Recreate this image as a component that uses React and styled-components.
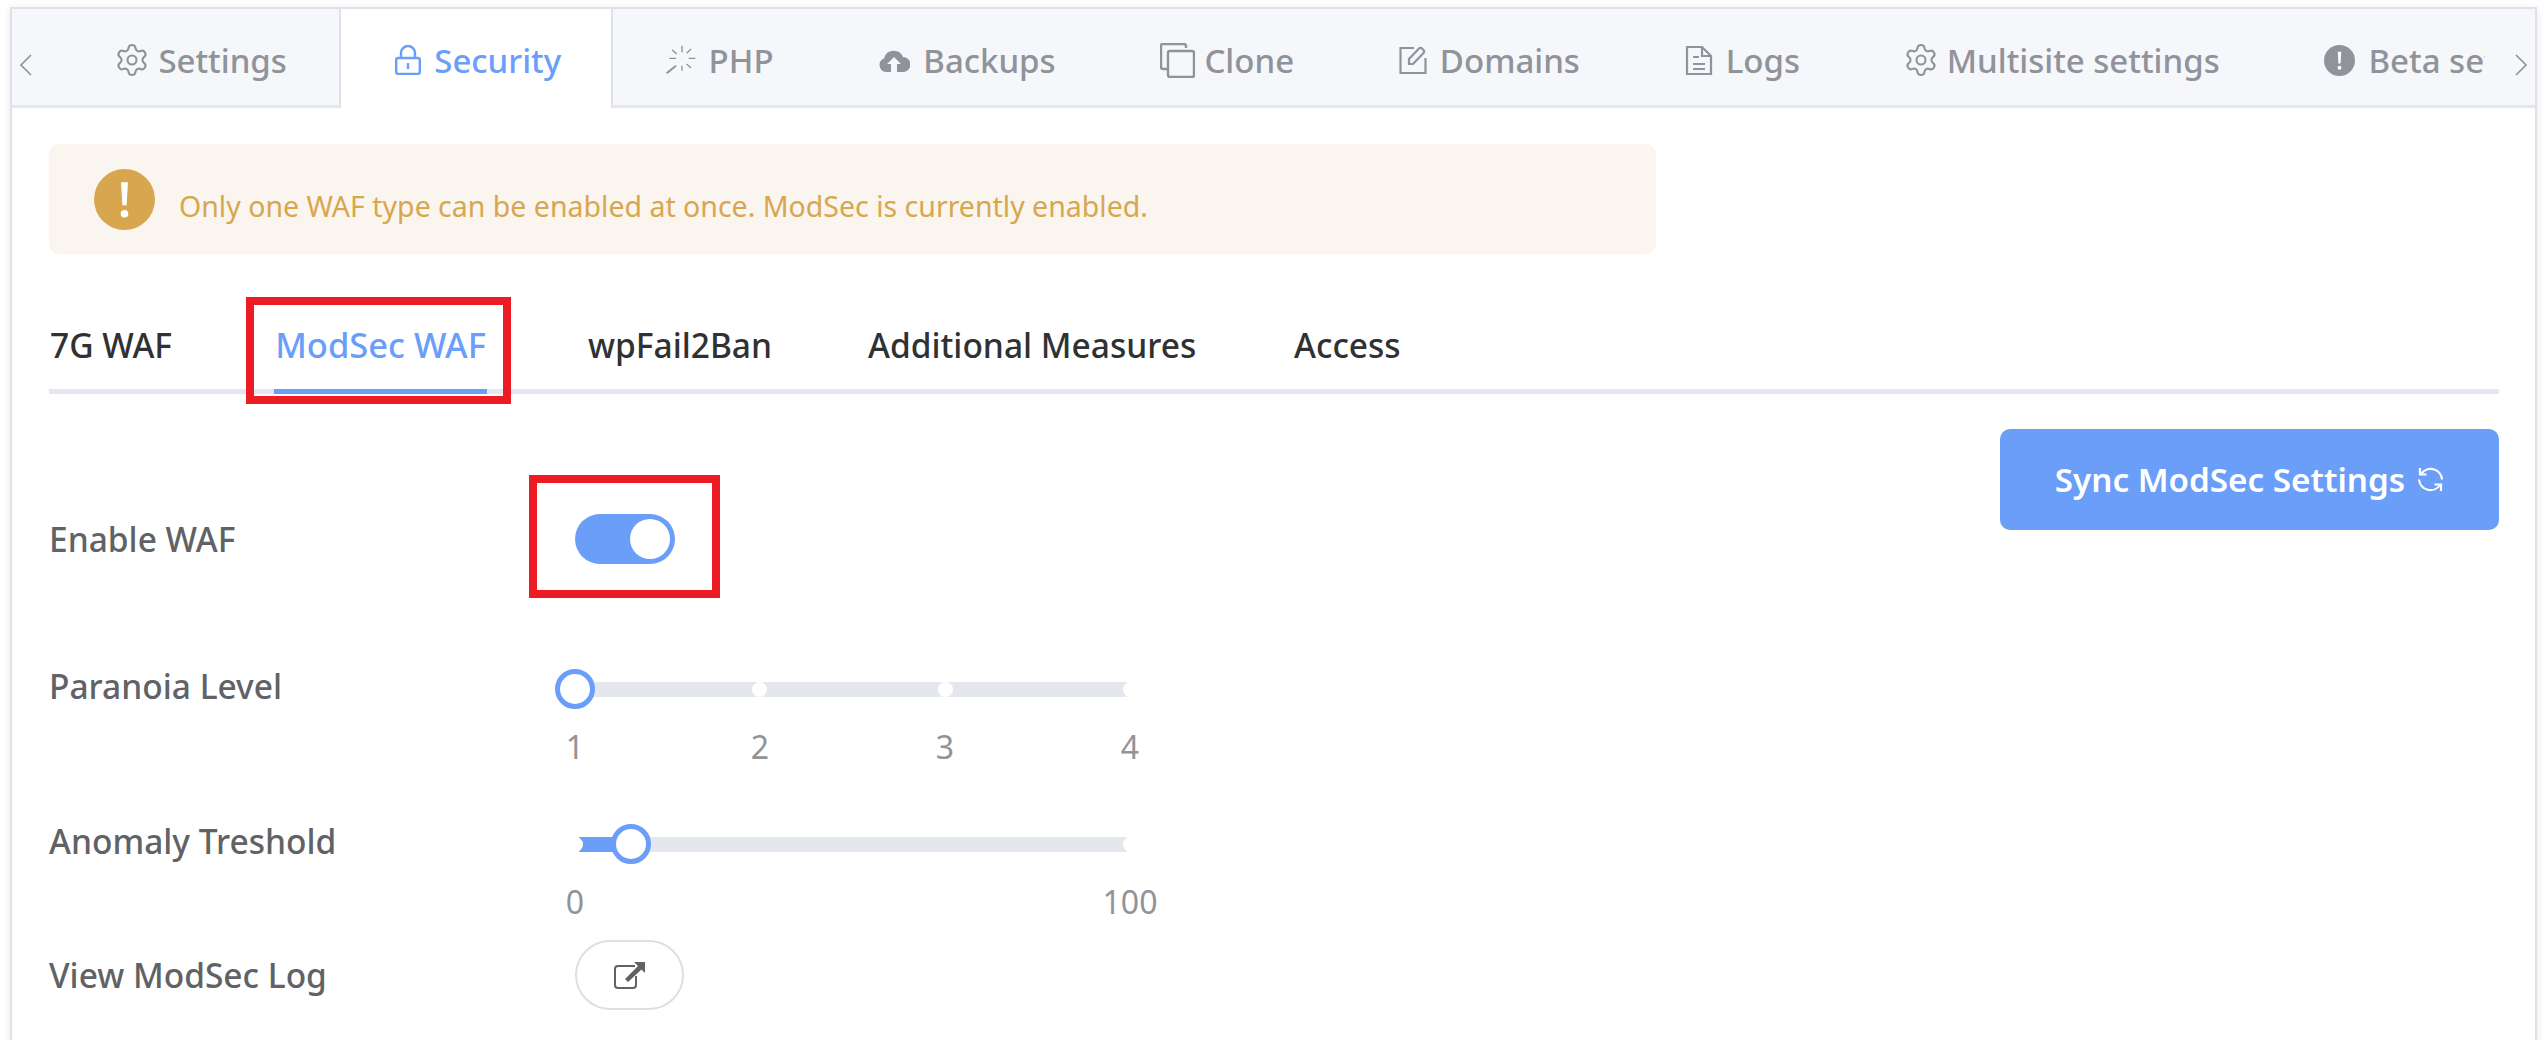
import React from "react";
import styled, { createGlobalStyle } from "styled-components";
import { Settings } from "lucide-react";

const GlobalStyle = createGlobalStyle`
  html, body {
    margin: 0;
    height: 1040px;
    overflow: hidden;
    background: #fff;
    font-family: "Noto Sans", "Open Sans", Arial, sans-serif;
  }
`;

const Card = styled.div`
  margin: 7px 10px 0;
  min-height: 1100px;
  background: #fff;
  border: 2px solid #dfe1e8;
  box-shadow: 0 2px 8px rgba(0, 0, 0, 0.1);
`;

const TabBar = styled.div`
  position: relative;
  height: 96px;
  background: #f5f7fa;
  border-bottom: 3px solid #e4e7ed;
`;

const Arrow = styled.div`
  position: absolute;
  top: 45px;
  ${props => (props.$right ? "right: 8px;" : "left: 8px;")}
  color: #909399;
  line-height: 0;
`;

const TabScroll = styled.div`
  display: flex;
  height: 99px;
  margin-right: 50px;
  padding-left: 52px;
  overflow: hidden;
`;

const Tab = styled.div`
  display: flex;
  flex: none;
  align-items: center;
  gap: 13px;
  height: 99px;
  padding: 3px 52.4px 0;
  box-sizing: border-box;
  font-size: 33px;
  font-weight: 500;
  white-space: nowrap;
  color: ${props => (props.$active ? "#6a9ef8" : "#909399")};
  ${props =>
    props.$active &&
    `
    background: #fff;
    border-left: 2px solid #dfe1e8;
    border-right: 2px solid #dfe1e8;
    padding: 3px 50px 0 54px;
  `}
`;

const Gear = styled(Settings)`
  margin: 0 -5px 0 -2px;
`;

const CopySvg = styled.svg`
  margin-right: -4px;
`;

const Body = styled.div`
  padding: 36px 36px 0 37px;
`;

const Alert = styled.div`
  display: flex;
  align-items: center;
  gap: 24px;
  width: 1607px;
  height: 110px;
  padding-left: 45px;
  box-sizing: border-box;
  background: #faf5ee;
  border-radius: 10px;
  color: #d9a650;
  font-size: 28.5px;
`;

const AlertText = styled.span`
  margin-top: 14px;
`;

const SubTabs = styled.div`
  display: flex;
  margin-top: 36px;
  border-bottom: 5px solid #e4e7ed;
`;

const SubTab = styled.div`
  position: relative;
  width: ${props => props.$width}px;
  height: 104px;
  margin-bottom: -5px;
  margin-left: ${props => props.$left}px;
  padding-top: 30px;
  box-sizing: border-box;
  border-bottom: 5px solid ${props => (props.$active ? "#6a9ef8" : "transparent")};
  font-size: ${props => (props.$active ? "34.5px" : "33.5px")};
  font-weight: 500;
  line-height: 50px;
  white-space: nowrap;
  text-align: ${props => (props.$active ? "center" : "left")};
  color: ${props => (props.$active ? "#6a9ef8" : "#303133")};
`;

const Marker = styled.div`
  position: absolute;
  inset: ${props => props.$inset};
  border: 8px solid #ed1c24;
`;

const FormArea = styled.div`
  display: flex;
  justify-content: space-between;
  align-items: flex-start;
`;

const Rows = styled.div`
  display: flex;
  flex-direction: column;
`;

const Row = styled.div`
  display: grid;
  grid-template-columns: 526px auto;
  align-items: ${props => props.$align || "center"};
  margin-top: ${props => props.$top}px;
`;

const Label = styled.div`
  font-size: 33.5px;
  font-weight: 500;
  line-height: 50px;
  color: #606266;
`;

const Toggle = styled.div`
  position: relative;
  display: flex;
  justify-content: flex-end;
  align-items: center;
  width: 100px;
  height: 50px;
  padding: 0 5px;
  box-sizing: border-box;
  border-radius: 25px;
  background: #6a9ef8;
`;

const Knob = styled.div`
  width: 40px;
  height: 40px;
  border-radius: 50%;
  background: #fff;
`;

const Slider = styled.div`
  padding-top: 21px;
`;

const SliderBox = styled.div`
  position: relative;
  width: 555px;
  height: 15px;
`;

const Track = styled.div`
  position: relative;
  height: 15px;
  background: #e4e7ed;
  clip-path: inset(0 3px 0 4px);
`;

const Fill = styled.div`
  height: 15px;
  width: ${props => props.$value}%;
  background: #6a9ef8;
`;

const Stop = styled.div`
  position: absolute;
  top: 0;
  left: ${props => props.$at}%;
  width: 15px;
  height: 15px;
  margin-left: -7.5px;
  border-radius: 50%;
  background: #fff;
`;

const Thumb = styled.div`
  position: absolute;
  top: -13px;
  left: ${props => props.$at}%;
  width: 40px;
  height: 40px;
  margin-left: -20px;
  box-sizing: border-box;
  border: 5px solid #6a9ef8;
  border-radius: 50%;
  background: #fff;
`;

const Marks = styled.div`
  display: flex;
  justify-content: space-between;
  width: 555px;
  margin-top: 30px;
`;

const Mark = styled.div`
  display: flex;
  justify-content: center;
  width: 0;
  font-size: 32px;
  line-height: 40px;
  color: #909399;
`;

const LinkButton = styled.div`
  display: flex;
  align-items: center;
  justify-content: center;
  width: 109px;
  height: 70px;
  box-sizing: border-box;
  border: 2px solid #dcdfe6;
  border-radius: 35px;
  color: #606266;
`;

const SyncButton = styled.div`
  display: flex;
  align-items: center;
  justify-content: center;
  gap: 12px;
  width: 499px;
  height: 101px;
  margin-top: 35px;
  border-radius: 10px;
  background: #6a9ef8;
  color: #fff;
  font-size: 33.2px;
  font-weight: 600;
`;

const Lock = () => (
  <svg width="26" height="30" viewBox="0 0 26 30" fill="none" stroke="currentColor" strokeWidth="2.4">
    <rect x="1.2" y="13" width="23.6" height="16" rx="2" />
    <path d="M6 13V8a7 7 0 0 1 14 0v5" />
    <path d="M13 18v6" />
  </svg>
);

const Spinner = () => (
  <svg width="30" height="30" viewBox="50 28 90 90" fill="none" stroke="currentColor" strokeWidth="4">
    <path d="M98 30v20M125 40l-13 13M118 68h20M112 85l13 12M98 90v15M60 68h20M68 42l14 13" />
    <path d="M80 90l-28 23" strokeWidth="6" />
  </svg>
);

const Cloud = () => (
  <svg width="32" height="24" viewBox="0 0 32 24" fill="currentColor">
    <path d="M8 24A7 7 0 0 1 6 10.5 10 10 0 0 1 25 9a7.5 7.5 0 0 1 0 15h-6v-8h4l-7-7-7 7h4v8z" />
  </svg>
);

const Copy = () => (
  <CopySvg width="35" height="35" viewBox="0 0 35 35" fill="none" stroke="currentColor" strokeWidth="2.4">
    <path d="M26 5V3a2 2 0 0 0-2-2H3a2 2 0 0 0-2 2v21a2 2 0 0 0 2 2h4" />
    <rect x="8" y="8" width="26" height="26" rx="2" />
  </CopySvg>
);

const Edit = () => (
  <svg width="28" height="28" viewBox="0 0 28 28" fill="none" stroke="currentColor" strokeWidth="2.2">
    <path d="M15 2H1.5v25h25V12" />
    <path d="M10 18v-5L20 2.5a2 2 0 0 1 3 0l1.5 1.500a2 2 0 0 1 0 3L14 18z" />
  </svg>
);

const Doc = () => (
  <svg width="28" height="31" viewBox="0 0 28 31" fill="none" stroke="currentColor" strokeWidth="2.2">
    <path d="M2 2h15l9 9v18H2z" />
    <path d="M17 2v9h9M8 12h6M8 19h12M8 24h12" />
  </svg>
);

const Warning = ({ size }) => (
  <svg width={size} height={size} viewBox="0 0 32 32">
    <circle cx="16" cy="16" r="16" fill="currentColor" />
    <path d="M14.2 7h3.600l-.7 12h-2.200z" fill="#fff" />
    <circle cx="16" cy="23.500" r="2" fill="#fff" />
  </svg>
);

const Chevron = ({ right }) => (
  <svg width="12" height="22" viewBox="0 0 12 22" fill="none" stroke="currentColor" strokeWidth="1.600">
    <path d={right ? "M1 1l10 10L1 21" : "M11 1L1 11l10 10"} />
  </svg>
);

const Refresh = () => (
  <svg width="27" height="27" viewBox="0 0 27 27" fill="none" stroke="currentColor" strokeWidth="2.2">
    <path d="M4 8A11.500 11.500 0 0 1 25 13.500" />
    <path d="M23 19A11.500 11.500 0 0 1 2 13.500" />
    <path d="M3 2v6.500h6.500M24 25v-6.500h-6.500" />
  </svg>
);

const External = () => (
  <svg width="31" height="27" viewBox="0 0 31 27" fill="none" stroke="currentColor">
    <path d="M21 4H4a3 3 0 0 0-3 3v16a3 3 0 0 0 3 3h15a3 3 0 0 0 3-3v-9" strokeWidth="2" />
    <path d="M20 0h11v11l-3.500-3.500L14 20l-3-3L24 4z" fill="currentColor" stroke="none" />
  </svg>
);

const tabs = [
  { name: "Settings", icon: <Gear size={36} strokeWidth={1.4} /> },
  { name: "Security", icon: <Lock />, active: true },
  { name: "PHP", icon: <Spinner /> },
  { name: "Backups", icon: <Cloud /> },
  { name: "Clone", icon: <Copy /> },
  { name: "Domains", icon: <Edit /> },
  { name: "Logs", icon: <Doc /> },
  { name: "Multisite settings", icon: <Gear size={36} strokeWidth={1.4} /> },
  { name: "Beta settings", icon: <Warning size={31} /> }
];

const subTabs = [
  { name: "7G WAF", left: 1, width: 125 },
  { name: "ModSec WAF", left: 99, width: 213, active: true },
  { name: "wpFail2Ban", left: 101, width: 179 },
  { name: "Additional Measures", left: 101, width: 326 },
  { name: "Access", left: 100, width: 104 }
];

export default function App() {
  return (
    <>
      <GlobalStyle />
      <Card>
        <TabBar>
          <Arrow>
            <Chevron />
          </Arrow>
          <TabScroll>
            {tabs.map(tab => (
              <Tab key={tab.name} $active={tab.active}>
                {tab.icon}
                {tab.name}
              </Tab>
            ))}
          </TabScroll>
          <Arrow $right>
            <Chevron right />
          </Arrow>
        </TabBar>
        <Body>
          <Alert>
            <Warning size={61} />
            <AlertText>Only one WAF type can be enabled at once. ModSec is currently enabled.</AlertText>
          </Alert>
          <SubTabs>
            {subTabs.map(tab => (
              <SubTab key={tab.name} $active={tab.active} $left={tab.left} $width={tab.width}>
                {tab.name}
                {tab.active && <Marker $inset="7px -24px -15px -28px" />}
              </SubTab>
            ))}
          </SubTabs>
          <FormArea>
            <Rows>
              <Row $top={120}>
                <Label>Enable WAF</Label>
                <Toggle>
                  <Knob />
                  <Marker $inset="-39px -45px -34px -46px" />
                </Toggle>
              </Row>
              <Row $top={97} $align="start">
                <Label>Paranoia Level</Label>
                <Slider>
                  <SliderBox>
                    <Track>
                      <Stop $at={33.33} />
                      <Stop $at={66.67} />
                      <Stop $at={100} />
                    </Track>
                    <Thumb $at={0} />
                  </SliderBox>
                  <Marks>
                    {["1", "2", "3", "4"].map(n => (
                      <Mark key={n}>{n}</Mark>
                    ))}
                  </Marks>
                </Slider>
              </Row>
              <Row $top={49} $align="start">
                <Label>Anomaly Treshold</Label>
                <Slider>
                  <SliderBox>
                    <Track>
                      <Fill $value={10} />
                      <Stop $at={0} />
                      <Stop $at={100} />
                    </Track>
                    <Thumb $at={10} />
                  </SliderBox>
                  <Marks>
                    <Mark>0</Mark>
                    <Mark>100</Mark>
                  </Marks>
                </Slider>
              </Row>
              <Row $top={18}>
                <Label>View ModSec Log</Label>
                <LinkButton>
                  <External />
                </LinkButton>
              </Row>
            </Rows>
            <SyncButton>
              Sync ModSec Settings
              <Refresh />
            </SyncButton>
          </FormArea>
        </Body>
      </Card>
    </>
  );
}
